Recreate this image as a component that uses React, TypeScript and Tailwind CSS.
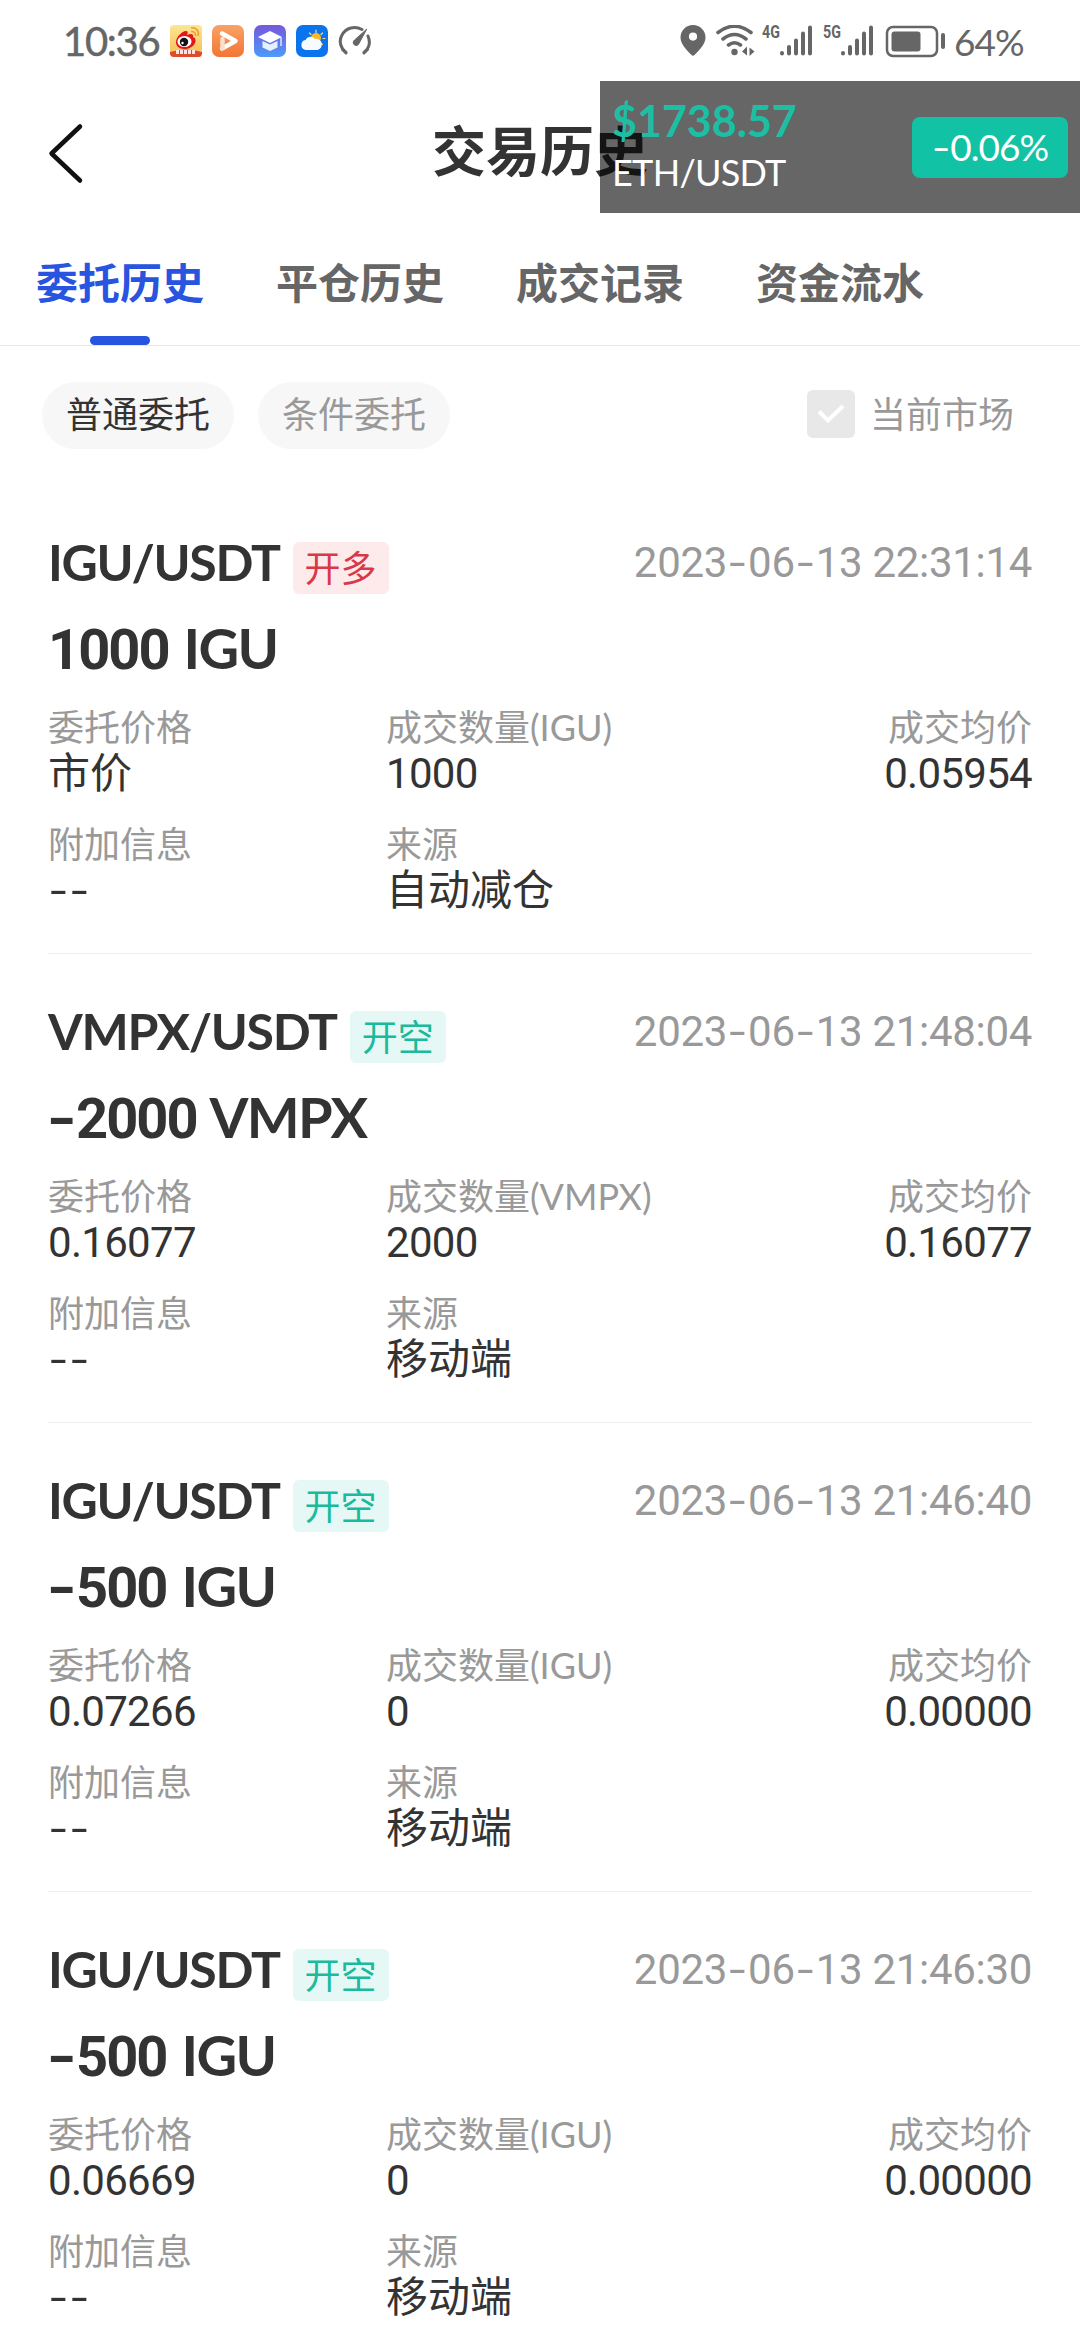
import { clsx } from 'clsx';

type Order = {
  symbol: string;
  coin: string;
  side: 'long' | 'short';
  time: string;
  amount: string;
  price: string;
  filled: string;
  average: string;
  source: string;
};

const orders: Order[] = [
  { symbol: 'IGU/USDT', coin: 'IGU', side: 'long', time: '2023-06-13 22:31:14', amount: '1000', price: '市价', filled: '1000', average: '0.05954', source: '自动减仓' },
  { symbol: 'VMPX/USDT', coin: 'VMPX', side: 'short', time: '2023-06-13 21:48:04', amount: '-2000', price: '0.16077', filled: '2000', average: '0.16077', source: '移动端' },
  { symbol: 'IGU/USDT', coin: 'IGU', side: 'short', time: '2023-06-13 21:46:40', amount: '-500', price: '0.07266', filled: '0', average: '0.00000', source: '移动端' },
  { symbol: 'IGU/USDT', coin: 'IGU', side: 'short', time: '2023-06-13 21:46:30', amount: '-500', price: '0.06669', filled: '0', average: '0.00000', source: '移动端' },
];

const tabs = ['委托历史', '平仓历史', '成交记录', '资金流水'];

// Hyphens get a digit-wide cell and a longer stroke than the font gives them
function Num({ text }: { text: string }) {
  return (
    <>
      {text.split(/(-)/).map((part, i) =>
        part === '-' ? (
          <span key={i} className="inline-block w-[0.5em] text-center tracking-normal scale-x-140">-</span>
        ) : (
          part
        )
      )}
    </>
  );
}

function AppIcons() {
  return (
    <div className="flex gap-[10px] ml-[11px]">
      <svg width="32" height="32" viewBox="0 0 32 32">
        <defs>
          <linearGradient id="weibo" x1="0" y1="0" x2="0" y2="1">
            <stop offset="0" stopColor="#fbe793" />
            <stop offset="0.7" stopColor="#f9c765" />
          </linearGradient>
          <clipPath id="weiboClip"><rect width="32" height="32" rx="4" /></clipPath>
        </defs>
        <g clipPath="url(#weiboClip)">
          <rect width="32" height="32" fill="url(#weibo)" />
          <path d="M0 27 Q16 22 32 27 V32 H0Z" fill="#e04a2c" />
          <path d="M6 17C6 12 12 6 16 6c2 0 2 2 1 4 4-2 7-1 6 2 3 1 3 4 2 6-2 4-6 6-11 6-5 0-8-3-8-7Z" fill="#e3161d" />
          <ellipse cx="14.500" cy="16.500" rx="7" ry="5.500" fill="#fff" />
          <circle cx="14" cy="17" r="4.200" fill="#111" />
          <circle cx="12.500" cy="18" r="1.200" fill="#fff" />
          <path d="M21 6.500c3-.5 5 1.500 4.500 4.500M21 3c5-1 8.500 3 7 8" fill="none" stroke="#ef9b2d" strokeWidth="1.500" />
          <path d="M6 27h20" stroke="#fff" strokeWidth="4" strokeDasharray="3 1" opacity=".85" />
        </g>
      </svg>
      <svg width="32" height="32" viewBox="0 0 32 32">
        <defs>
          <linearGradient id="video" x1="0" y1="0" x2="0" y2="1">
            <stop offset="0" stopColor="#f9a266" />
            <stop offset="1" stopColor="#f37435" />
          </linearGradient>
        </defs>
        <rect width="32" height="32" rx="7" fill="url(#video)" />
        <path d="M10 8.500 23.500 16 10 23.500" fill="none" stroke="#fff" strokeWidth="4.500" strokeLinecap="round" strokeLinejoin="round" />
        <path d="M10.500 14v9" stroke="#fde0cc" strokeWidth="4.500" strokeLinecap="round" />
      </svg>
      <svg width="32" height="32" viewBox="0 0 32 32">
        <defs>
          <linearGradient id="edu" x1="0" y1="0" x2="0" y2="1">
            <stop offset="0" stopColor="#7657dc" />
            <stop offset="1" stopColor="#4d9bf8" />
          </linearGradient>
        </defs>
        <rect width="32" height="32" rx="7" fill="url(#edu)" />
        <path d="M16 6 28 12 16 18 4 12Z" fill="#fff" />
        <path d="M8.500 16 16 19.500 23.500 16v6.500L16 26l-7.500-3.500Z" fill="#e6f0ff" />
        <path d="M27 12.500V21" stroke="#fff" strokeWidth="1.200" />
      </svg>
      <svg width="32" height="32" viewBox="0 0 32 32">
        <rect width="32" height="32" rx="7" fill="#0a73ee" />
        <path d="M20 5v2.500M13.500 8l1.500 1.500M26.500 8 25 9.500M29 13.500h-2M26.500 19.500 25 18.500" stroke="#f7d98a" strokeWidth="1.200" strokeLinecap="round" />
        <circle cx="20" cy="13" r="5" fill="#fbb928" />
        <path d="M10 25a5 5 0 0 1-.5-9.900A5.500 5.500 0 0 1 19 14a5.600 5.600 0 0 1 2.500 11Z" fill="#f6fbff" />
      </svg>
      <svg width="34" height="32" viewBox="0 0 34 32" fill="none" stroke="#666" strokeWidth="3" strokeLinecap="round">
        <path d="M8 27.500C2.500 23 .500 16 4 10 8 2.500 17 .500 24 4.500M30 11c2.500 6 1.500 12-4 16.500M4.500 24.500 8 28M29.500 24.500 26 28" />
        <path d="M28.500 4.500 21 18.500a3 3 0 1 1-4.500-3.500Z" fill="#666" strokeWidth="1" />
      </svg>
    </div>
  );
}

function Signal({ label }: { label: string }) {
  return (
    <div className="flex items-start">
      <span className="w-[17px] font-['Roboto'] text-[19px] leading-[14px] font-bold origin-left scale-x-75">{label}</span>
      <svg width="34" height="32" viewBox="0 0 34 32" stroke="#666" strokeWidth="4" strokeLinecap="round">
        <path d="M3 28v.5M10 22v6.500M17 15.500v13M24 8.500v20M31 2.500v26" />
      </svg>
    </div>
  );
}

function StatusBar() {
  return (
    <div className="h-[81px] pl-[63px] pt-[25px] flex items-start text-[#666]">
      <span className="font-['Lato'] text-[40px] leading-8 w-[96px] tracking-[-1.3px] [-webkit-text-stroke:0.5px_#666]">10:36</span>
      <AppIcons />
      <svg className="ml-[307px]" width="28" height="32" viewBox="0 0 28 32">
        <path fillRule="evenodd" d="M14 0C7 0 1.500 5.500 1.500 12.500 1.500 20 9 26 12.500 30q1.500 1.500 3 0C19 26 26.500 20 26.500 12.500 26.500 5.500 21 0 14 0Zm0 7.500a4 4 0 1 1 0 8.200 4 4 0 0 1 0-8.200Z" fill="#666" />
      </svg>
      <svg className="ml-[9px]" width="40" height="32" viewBox="0 0 40 32" fill="none" stroke="#666" strokeWidth="3.600" strokeLinecap="round">
        <path d="M2 7.500Q18.500-5 35 7.500M7 14q11.500-9 23 0M12.500 20q6-4.500 12 0" />
        <circle cx="18.500" cy="27" r="3.200" fill="#666" stroke="none" />
        <path d="M31 21.500v9l-5-4zM33.500 31v-8.500l5 4z" fill="#666" stroke="none" />
      </svg>
      <div className="ml-[6px] flex gap-[10px]">
        <Signal label="4G" />
        <Signal label="5G" />
      </div>
      <svg className="ml-[11px]" width="62" height="33" viewBox="0 0 62 33">
        <rect x="2" y="2" width="50" height="29" rx="6" fill="none" stroke="#666" strokeWidth="2.500" />
        <rect x="6.500" y="6.500" width="29" height="20" rx="3" fill="#666" />
        <path d="M58 10v12" stroke="#666" strokeWidth="4" strokeLinecap="round" />
      </svg>
      <span className="ml-[7px] mt-[1px] font-['Lato'] text-[37px] leading-8 tracking-[-1px]">64%</span>
    </div>
  );
}

function PriceOverlay() {
  return (
    <div className="absolute right-0 top-[81px] w-[480px] h-[132px] bg-black/60 flex items-center justify-between px-3 font-['Lato']">
      <div>
        <div className="text-[43px] leading-[50px] font-bold text-[#1cbfa3]">$1738.57</div>
        <div className="text-[36px] leading-[52px] tracking-[-0.7px] text-white">ETH/USDT</div>
      </div>
      <div className="w-[156px] h-[61px] rounded-lg bg-[#11c2a5] text-white text-[37px] flex items-center justify-center">
        <span className="tracking-[-1px]"><Num text="-0.06%" /></span>
      </div>
    </div>
  );
}

function Field({ label, value, right }: { label: string; value: string; right?: boolean }) {
  return (
    <div className={clsx('h-[117px]', right && 'text-right')}>
      <div className="text-[36px] leading-[46px] text-[#999]">{label}</div>
      <div className={clsx("font-['Roboto','Noto_Sans_CJK_SC',sans-serif] text-[42px] leading-[48px]", /\d/.test(value) && 'tracking-[-0.7px]')}>
        <Num text={value} />
      </div>
    </div>
  );
}

function OrderCard({ order }: { order: Order }) {
  const long = order.side === 'long';
  return (
    <div className="h-[469px] mx-12 pt-[50px] border-b border-[#ededed] text-[#333]">
      <div className="flex items-start h-[70px]">
        <span className="text-[50px] leading-[54px] font-bold tracking-[-1.3px]">{order.symbol}</span>
        <span className={clsx('ml-[13px] mt-[7px] w-[96px] h-[52px] rounded-md text-center text-[36px] leading-[52px]', long ? 'bg-[#fdeaeb] text-[#d9374a]' : 'bg-[#e6f8f5] text-[#19bb9c]')}>
          {long ? '开多' : '开空'}
        </span>
        <span className="ml-auto font-['Roboto'] text-[42px] leading-[56px] tracking-[-0.3px] text-[#999]">
          <Num text={order.time} />
        </span>
      </div>
      <div className="h-[99px] text-[56px] leading-[86px] font-bold tracking-[-1.6px]">
        <span className="font-['Roboto'] tracking-[-2px] mr-[3px]"><Num text={order.amount} /></span> {order.coin}
      </div>
      <div className="grid grid-cols-[338px_1fr_auto]">
        <Field label="委托价格" value={order.price} />
        <Field label={`成交数量(${order.coin})`} value={order.filled} />
        <Field label="成交均价" value={order.average} right />
        <Field label="附加信息" value="--" />
        <Field label="来源" value={order.source} />
      </div>
    </div>
  );
}

export default function App() {
  return (
    <div className="relative w-[1080px] h-[2340px] overflow-hidden bg-white font-['Lato','Noto_Sans_CJK_SC',sans-serif]">
      <StatusBar />
      <header className="relative h-[144px] flex items-center justify-center text-[#333]">
        <svg className="absolute left-[46px] top-[40px]" width="40" height="64" viewBox="0 0 40 64" fill="none" stroke="#111" strokeWidth="4.500" strokeLinecap="round" strokeLinejoin="round">
          <path d="M34 5.500 5.500 32.500 34 59.500" />
        </svg>
        <h1 className="pb-1 text-[54px] font-bold">交易历史</h1>
      </header>
      <nav className="flex h-[121px] border-b border-[#e6e6e6]">
        {tabs.map((tab, i) => (
          <div key={tab} className={clsx('w-60 flex flex-col items-center text-[42px] font-bold', i === 0 ? 'text-[#2854e0]' : 'text-[#666]')}>
            <span className="h-[111px] leading-[116px]">{tab}</span>
            {i === 0 && <span className="w-[60px] h-[9px] rounded-full bg-[#2854e0]" />}
          </div>
        ))}
      </nav>
      <div className="h-[139px] pl-[42px] pr-[66px] pt-[36px] flex items-start text-[36px] leading-[64px]">
        <span className="w-[192px] h-[67px] rounded-full bg-[#f7f7f7] text-center text-[#333]">普通委托</span>
        <span className="ml-6 w-[192px] h-[67px] rounded-full bg-[#f7f7f7] text-center text-[#999]">条件委托</span>
        <label className="ml-auto flex items-center text-[#999]">
          <span className="mr-[15px] w-12 h-12 rounded-md bg-[#e8e8e8] flex items-center justify-center">
            <svg width="30" height="24" viewBox="0 0 30 24" fill="none" stroke="#fff" strokeWidth="4">
              <path d="M3 9.500 12 18.500 27 4" />
            </svg>
          </span>
          当前市场
        </label>
      </div>
      {orders.map((order) => (
        <OrderCard key={order.time} order={order} />
      ))}
      <PriceOverlay />
    </div>
  );
}
